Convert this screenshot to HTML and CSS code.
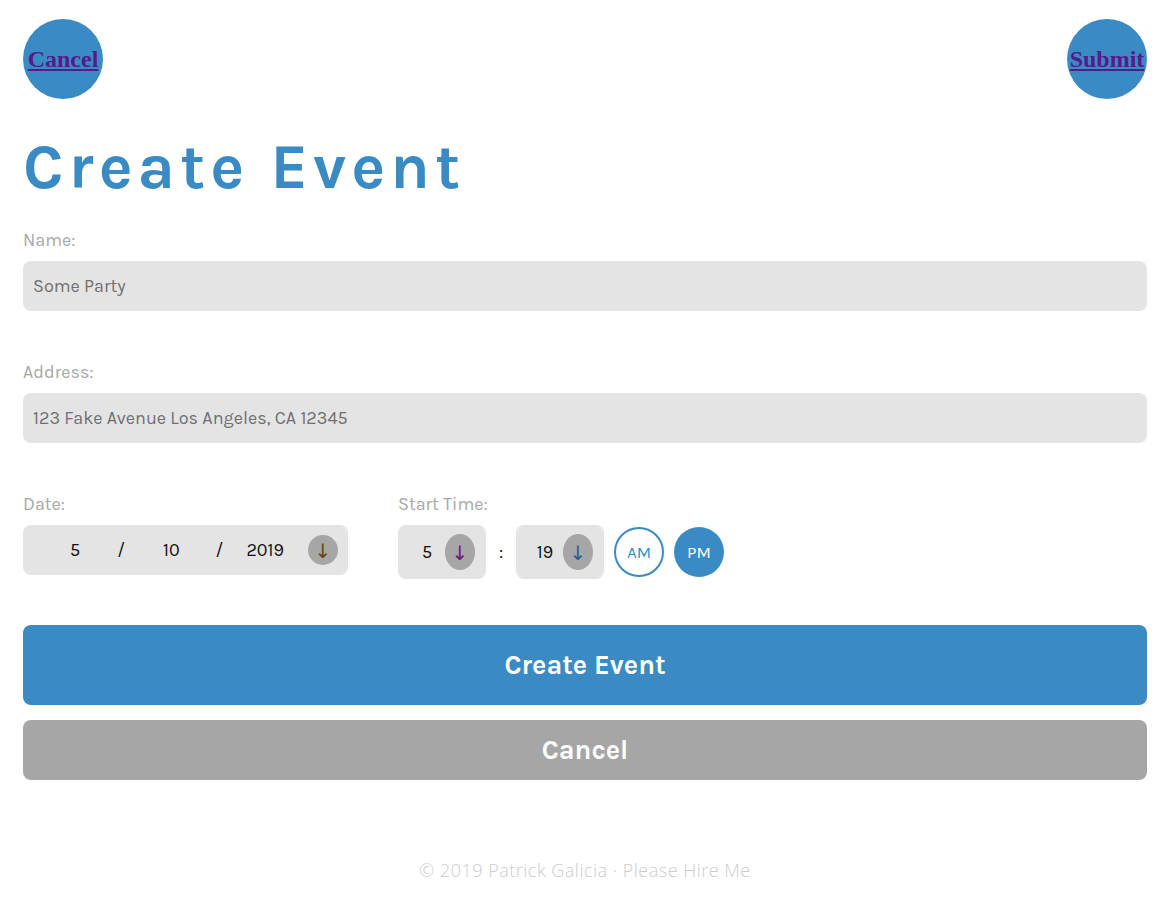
FILE: index.html
```html
<!DOCTYPE html>
<html lang="en">
<head>
<meta charset="utf-8">
<title>Create Event</title>
<link rel="stylesheet" href="styles.css">
</head>
<body>
<div class="page">
  <header class="topbar">
    <div class="round-link"><a href="#">Cancel</a></div>
    <div class="round-link"><a href="#">Submit</a></div>
  </header>

  <h1 class="title">Create Event</h1>

  <div class="field">
    <div class="label">Name:</div>
    <div class="input">Some Party</div>
  </div>

  <div class="field">
    <div class="label">Address:</div>
    <div class="input">123 Fake Avenue Los Angeles, CA 12345</div>
  </div>

  <div class="row">
    <div class="date-field">
      <div class="label">Date:</div>
      <div class="date-box">
        <span class="d-m">5</span>
        <span class="d-sep">/</span>
        <span class="d-d">10</span>
        <span class="d-sep2">/</span>
        <span class="d-y">2019</span>
        <span class="drop drop-date"><span class="arrow arrow-brown">↓</span></span>
      </div>
    </div>
    <div class="time-field">
      <div class="label">Start Time:</div>
      <div class="time-row">
        <div class="time-box"><span class="t-num">5</span><span class="drop drop-time"><span class="arrow arrow-purple">↓</span></span></div>
        <span class="colon">:</span>
        <div class="time-box"><span class="t-num">19</span><span class="drop drop-time"><span class="arrow arrow-blue">↓</span></span></div>
        <div class="ampm am">AM</div>
        <div class="ampm pm">PM</div>
      </div>
    </div>
  </div>

  <button class="btn btn-primary">Create Event</button>
  <button class="btn btn-secondary">Cancel</button>

  <footer class="footer">© 2019 Patrick Galicia · Please Hire Me</footer>
</div>
</body>
</html>
```

FILE: styles.css
```css
html, body {
  margin: 0;
  padding: 0;
  background: #fff;
}

body {
  font-family: "Karla", "Roboto", "Liberation Sans", sans-serif;
}

.page {
  padding: 19px 21px 0 23px;
}

.topbar {
  display: flex;
  justify-content: space-between;
}

.round-link {
  width: 80px;
  height: 80px;
  border-radius: 50%;
  background: #3a8ac3;
  display: flex;
  align-items: center;
  justify-content: center;
}

.round-link a {
  font-family: "Liberation Serif", "Times New Roman", serif;
  font-weight: bold;
  font-size: 24px;
  color: #551a8b;
  text-decoration: underline;
}

.title {
  margin: 28px 0 22px 0;
  font-family: "Karla", "Roboto", "Liberation Sans", sans-serif;
  font-weight: 700;
  font-size: 64px;
  line-height: 80px;
  letter-spacing: 5px;
  color: #3a8ac3;
}

.field {
  margin-bottom: 50px;
}

.label {
  font-size: 18px;
  line-height: 22px;
  color: #a8a8a8;
  margin-bottom: 10px;
}

.input {
  height: 50px;
  border-radius: 8px;
  background: #e4e4e4;
  display: flex;
  align-items: center;
  padding-left: 10px;
  font-size: 18px;
  color: #707070;
}

.row {
  display: flex;
  gap: 50px;
}

.date-box {
  width: 325px;
  height: 50px;
  border-radius: 8px;
  background: #e4e4e4;
  display: flex;
  align-items: center;
  font-size: 18px;
  color: #111;
}

.d-m { margin-left: 47px; }
.d-sep { margin-left: 37px; }
.d-d { margin-left: 38px; }
.d-sep2 { margin-left: 36px; }
.d-y { margin-left: 23px; }

.drop {
  background: #a6a6a6;
  border-radius: 50%;
  display: flex;
  align-items: center;
  justify-content: center;
  flex: none;
}

.drop-date {
  width: 30px;
  height: 30px;
  margin-left: 24px;
}

.drop-time {
  width: 30px;
  height: 36px;
  margin-left: 1px;
}

.arrow {
  font-family: "DejaVu Sans", sans-serif;
  font-size: 20px;
  line-height: 1;
  margin-top: 2px;
}

.arrow-brown { color: #6b4410; }
.arrow-purple { color: #6a1a80; }
.arrow-blue { color: #245f94; }

.time-row {
  display: flex;
  align-items: center;
}

.time-box {
  width: 88px;
  height: 54px;
  box-sizing: border-box;
  padding-left: 12px;
  border-radius: 8px;
  background: #e4e4e4;
  display: flex;
  align-items: center;
  font-size: 18px;
  color: #111;
}

.t-num {
  width: 34px;
  text-align: center;
}

.colon {
  width: 30px;
  text-align: center;
  font-size: 18px;
  color: #111;
}

.ampm {
  width: 50px;
  height: 50px;
  box-sizing: border-box;
  border-radius: 50%;
  display: flex;
  align-items: center;
  justify-content: center;
  font-size: 17px;
  margin-left: 10px;
}

.am {
  border: 2px solid #3a8ac3;
  color: #3a8ac3;
}

.pm {
  background: #3a8ac3;
  color: #fff;
}

.btn {
  display: block;
  width: 100%;
  border: none;
  border-radius: 8px;
  color: #fff;
  font-family: "Karla", "Roboto", "Liberation Sans", sans-serif;
  font-weight: 700;
  font-size: 27px;
  cursor: pointer;
}

.btn-primary {
  margin-top: 46px;
  height: 80px;
  background: #3a8ac3;
}

.btn-secondary {
  margin-top: 15px;
  height: 60px;
  background: #a6a6a6;
}

.footer {
  margin-top: 78px;
  line-height: 24px;
  text-align: center;
  font-family: "Open Sans", "Lato", sans-serif;
  font-weight: 300;
  font-size: 18px;
  letter-spacing: 0.5px;
  color: #cccccc;
}
```
